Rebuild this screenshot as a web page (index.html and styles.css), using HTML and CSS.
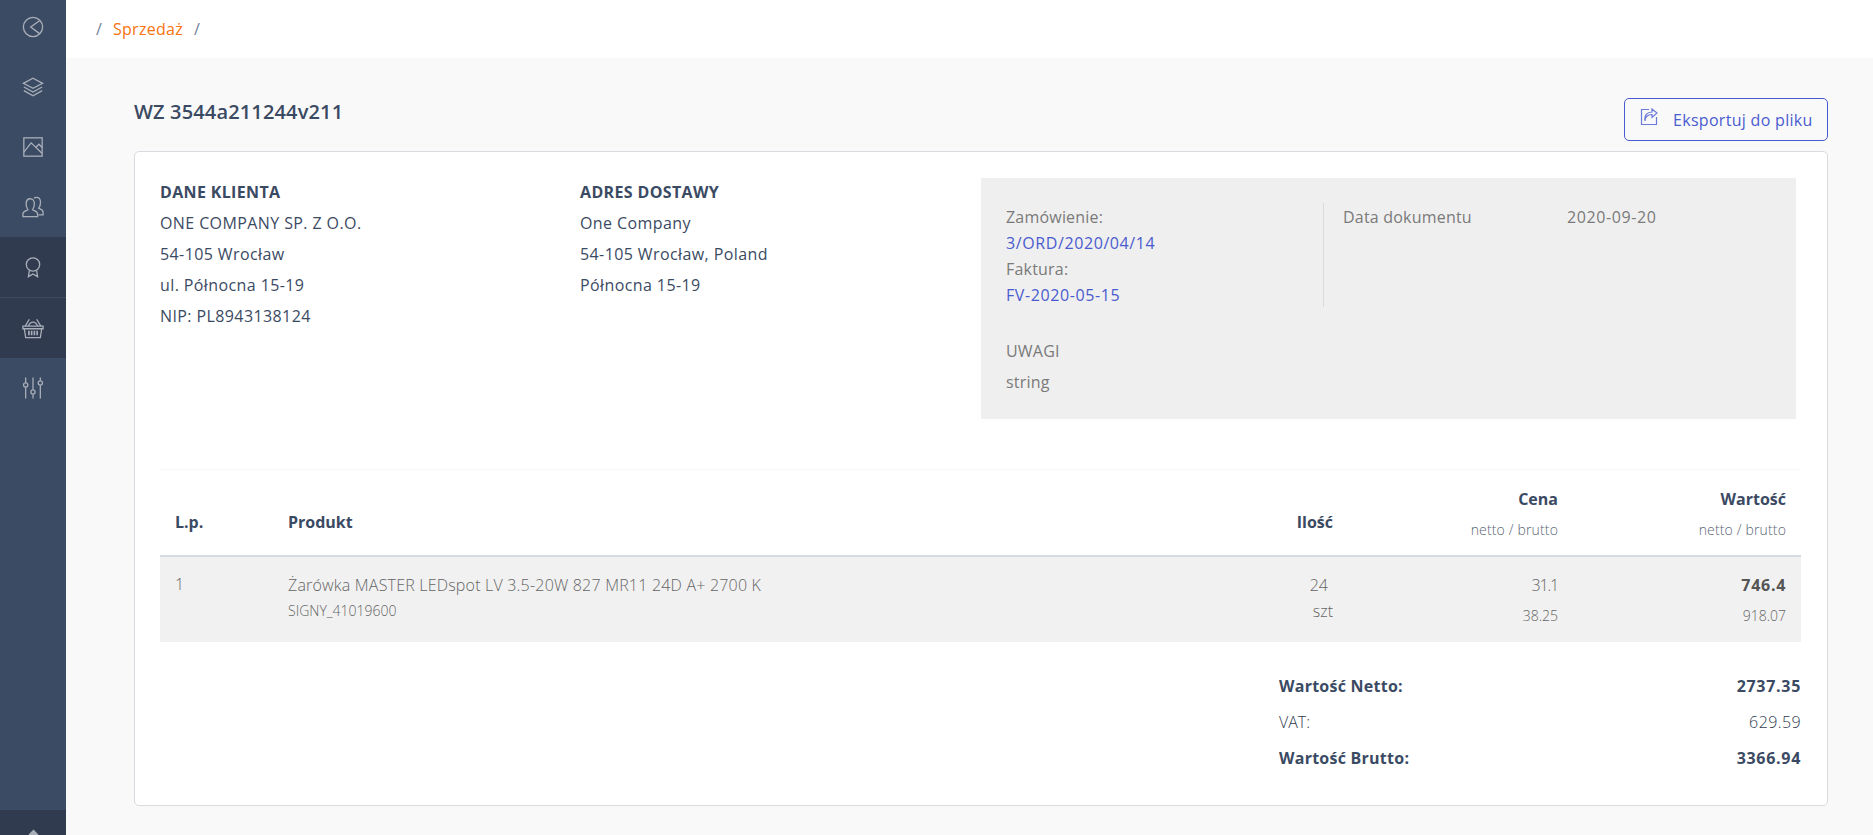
FILE: index.html
```html
<!DOCTYPE html>
<html lang="pl">
<head>
<meta charset="utf-8">
<title>WZ 3544a211244v211</title>
<link rel="stylesheet" href="styles.css">
</head>
<body>
<div class="app">
  <aside class="sidebar">
    <nav class="side-nav">
      <a class="side-item"><svg viewBox="0 0 24 24" class="ico"><circle cx="12" cy="12" r="10.500"/><path d="M19.500 4.800 9.500 12l10 7.500"/></svg></a>
      <a class="side-item"><svg viewBox="0 0 24 24" class="ico"><path d="M12 2.500 22.500 8 12 13.500 1.500 8z"/><path d="M2 12l10 5.500L22 12"/><path d="M2 16l10 5.500L22 16"/></svg></a>
      <a class="side-item"><svg viewBox="0 0 24 24" class="ico"><rect x="2" y="2" width="20" height="20"/><path d="M2 17.500 10 7.500 22 19"/><path d="M15 12.500l3.500-3.500 3.500 3.500"/></svg></a>
      <a class="side-item"><svg viewBox="0 0 24 24" class="ico"><path d="M1 22.500v-3c0-2.500 3-3 5.500-4.500-1.300-2-2-4-2-6.500C4.500 5 6.500 3 9 3s4.500 2 4.500 5.500c0 2.500-.7 4.500-2 6.500 2.500 1.500 5.500 2 5.500 4.500v3z"/><path d="M13 2.500c.8-.6 1.700-1 2.800-1 2.600 0 4.400 2 4.400 5.500 0 2.500-.6 4.500-2 6.300 2.300 1.200 4.800 1.700 4.800 4.200v3h-5"/></svg></a>
      <a class="side-item is-active"><svg viewBox="0 0 24 24" class="ico"><circle cx="12" cy="9.300" r="7.300"/><path d="M8 16l-1 6.500 5-3 5 3-1-6.500"/></svg></a>
      <a class="side-item is-active has-top"><svg viewBox="0 0 24 24" class="ico"><path d="M1 10h22v2.800H1z"/><path d="M2.500 12.800 4 22.500h16l1.500-9.700"/><path d="M3.500 10 8 2.500M20.500 10 16 2.500"/><path d="M7 10c1-3 3-4.500 5-4.500s4 1.500 5 4.500"/><path class="ico-bars" d="M7.500 15v5M10.500 15v5M13.500 15v5M16.500 15v5"/></svg></a>
      <a class="side-item"><svg viewBox="0 0 24 24" class="ico"><path d="M4 .5v6M4 11v12.500M12 .5V14M12 19v4.500M20 .5v3.500M20 9v14.500"/><circle cx="4" cy="8.700" r="2.300"/><circle cx="12" cy="16.400" r="2.300"/><circle cx="20" cy="6.500" r="2.300"/></svg></a>
    </nav>
    <div class="side-foot"><span class="side-foot-mark"></span></div>
  </aside>
  <div class="main">
    <header class="topbar">
      <span class="crumb-sep">/</span>
      <a class="crumb">Sprzedaż</a>
      <span class="crumb-sep">/</span>
    </header>
    <main class="content">
      <div class="page-head">
        <h1 class="page-title">WZ 3544a211244v211</h1>
        <button class="btn-export" type="button">
          <svg viewBox="0 0 18 18" class="btn-ico"><path d="M9 1.500H1.500v15h15V9"/><path d="M5 13c0-4 2.500-6.500 7-6.500v3L17 5l-5-4v3c-5 0-8 3.500-7 9z"/></svg>
          <span>Eksportuj do pliku</span>
        </button>
      </div>
      <section class="card">
        <div class="info-row">
          <div class="address">
            <h3 class="addr-title">DANE KLIENTA</h3>
            <p>ONE COMPANY SP. Z O.O.</p>
            <p>54-105 Wrocław</p>
            <p>ul. Północna 15-19</p>
            <p>NIP: PL8943138124</p>
          </div>
          <div class="address">
            <h3 class="addr-title">ADRES DOSTAWY</h3>
            <p>One Company</p>
            <p>54-105 Wrocław, Poland</p>
            <p>Północna 15-19</p>
          </div>
          <div class="doc-panel">
            <div class="doc-top">
              <div class="doc-links">
                <div>Zamówienie:</div>
                <a class="link">3/ORD/2020/04/14</a>
                <div>Faktura:</div>
                <a class="link">FV-2020-05-15</a>
              </div>
              <div class="doc-date">
                <span class="doc-date-label">Data dokumentu</span>
                <span class="doc-date-value">2020-09-20</span>
              </div>
            </div>
            <div class="notes">
              <p>UWAGI</p>
              <p>string</p>
            </div>
          </div>
        </div>
        <table class="items">
          <thead>
            <tr>
              <th class="col-lp th-single">L.p.</th>
              <th class="col-prod th-single">Produkt</th>
              <th class="col-qty th-single">Ilość</th>
              <th class="col-price"><div class="th-main">Cena</div><div class="th-sub">netto / brutto</div></th>
              <th class="col-value"><div class="th-main">Wartość</div><div class="th-sub">netto / brutto</div></th>
            </tr>
          </thead>
          <tbody>
            <tr>
              <td class="col-lp">1</td>
              <td class="col-prod"><div class="prod-name">Żarówka MASTER LEDspot LV 3.5-20W 827 MR11 24D A+ 2700 K</div><div class="prod-sku">SIGNY_41019600</div></td>
              <td class="col-qty"><div class="qty-num">24</div><div class="qty-unit">szt</div></td>
              <td class="col-price"><div class="val-main val-narrow">31.1</div><div class="val-sub">38.25</div></td>
              <td class="col-value"><div class="val-main val-strong">746.4</div><div class="val-sub">918.07</div></td>
            </tr>
          </tbody>
        </table>
        <div class="totals">
          <div class="total-row total-strong"><span>Wartość Netto:</span><span class="total-num">2737.35</span></div>
          <div class="total-row"><span>VAT:</span><span class="total-num-light">629.59</span></div>
          <div class="total-row total-strong"><span>Wartość Brutto:</span><span class="total-num">3366.94</span></div>
        </div>
      </section>
    </main>
  </div>
</div>
</body>
</html>
```
FILE: styles.css
```css
* { box-sizing: border-box; }
html, body { margin: 0; height: 100%; overflow: hidden; }
body { font-family: "Open Sans", sans-serif; font-size: 16px; color: #3b4a63; background: #f9f9f9; }
.app { display: flex; height: 835px; }

.sidebar { width: 66px; flex: none; background: #3c4b64; display: flex; flex-direction: column; justify-content: space-between; }
.side-nav { display: flex; flex-direction: column; }
.side-item { height: 60px; display: flex; align-items: center; justify-content: center; }
.side-item:first-child { height: 57px; padding-bottom: 3px; }
.side-item.is-active { background: #303b50; }
.side-item.has-top { border-top: 1px solid #3f4b61; height: 61px; }
.ico { width: 22px; height: 22px; fill: none; stroke: #a9afb9; stroke-width: 1.400; }
.ico-bars { stroke-width: 1.800; }
.side-foot { height: 25px; background: #303b50; display: flex; justify-content: center; }
.side-foot-mark { width: 7px; height: 7px; margin-top: 21px; background: #a9afb9; transform: rotate(45deg); }

.main { flex: 1; min-width: 0; display: flex; flex-direction: column; }
.topbar { height: 58px; background: #fff; display: flex; align-items: center; gap: 11px; padding: 0 0 0 30px; }
.crumb-sep { color: #6f8299; }
.crumb { color: #f9730f; letter-spacing: .3px; }

.content { padding: 0 45px 0 68px; }
.page-head { display: flex; justify-content: space-between; height: 93px; }
.page-title { margin: 40px 0 0; font-size: 20px; line-height: 28px; font-weight: 600; letter-spacing: .15px; color: #3b4a63; }
.btn-export { width: 204px; height: 43px; margin-top: 40px; border: 1px solid #4a5bd0; border-radius: 5px; background: transparent; color: #4a5bd0; font: 16px "Open Sans", sans-serif; letter-spacing: .3px; display: flex; align-items: center; gap: 15px; padding: 0 0 0 15px; }
.btn-ico { width: 18px; height: 18px; margin-top: -5px; flex: none; fill: none; stroke: #6b79d8; stroke-width: 1.200; }

.card { height: 655px; background: #fff; border: 1px solid #d8dbe0; border-radius: 5px; padding: 26px 0 0 25px; }
.info-row { display: flex; height: 243px; }
.address { width: 420px; line-height: 31px; margin-top: -1px; letter-spacing: .4px; }
.address p { margin: 0; }
.addr-title { margin: 0; font-size: 16px; font-weight: 700; line-height: 31px; letter-spacing: .35px; }
.doc-panel { width: 815px; height: 241px; margin-left: -19px; background: #efefef; padding: 25px 25px 0; color: #7a7a7a; letter-spacing: .2px; }
.doc-top { display: flex; height: 104px; line-height: 26px; }
.doc-links { width: 318px; border-right: 1px solid #d8dbe0; padding-top: 1px; }
.link { display: block; color: #4a5bd0; letter-spacing: .6px; }
.doc-date { padding: 1px 0 0 19px; display: flex; align-items: flex-start; }
.doc-date-label { width: 224px; }
.doc-date-value { letter-spacing: .6px; }
.notes { margin-top: 29px; line-height: 31px; }
.notes p { margin: 0; }

.items { width: 1641px; margin-top: 48px; border-collapse: collapse; border-top: 1px solid #f8f8f8; table-layout: fixed; }
.items th { height: 86px; padding: 14px 0 0; vertical-align: top; font-weight: 700; border-bottom: 2px solid #d8dbe0; }
.items th.th-single { padding-top: 37px; line-height: 30px; }
.th-main { line-height: 30px; }
.th-sub { font-size: 14px; font-weight: 300; line-height: 31px; color: #5a6575; letter-spacing: .15px; }
.col-lp { width: 128px; padding-left: 15px !important; text-align: left; }
.col-prod { text-align: left; }
.col-qty { width: 140px; text-align: right; }
.col-price { width: 225px; text-align: right; }
.col-value { width: 243px; text-align: right; padding-right: 15px !important; }
.items td { height: 86px; padding: 16px 0 0; background: #f1f1f1; color: #656565; font-weight: 300; vertical-align: top; }
.prod-name { line-height: 24px; letter-spacing: .2px; }
.prod-sku { font-size: 14px; line-height: 28px; }
.qty-num { padding-right: 5px; line-height: 24px; }
.qty-unit { line-height: 28px; }
.val-main { line-height: 24px; }
.val-narrow { letter-spacing: -1.200px; }
.val-strong { font-weight: 700; color: #555; letter-spacing: .7px; }
.val-sub { font-size: 14px; line-height: 38px; }

.totals { width: 522px; margin-left: 1119px; padding-top: 26px; }
.total-row { display: flex; justify-content: space-between; height: 36px; line-height: 36px; font-weight: 300; color: #2f3a4e; }
.total-strong { font-weight: 700; color: #3b4a63; letter-spacing: .25px; }
.total-num { letter-spacing: .7px; }
.total-num-light { letter-spacing: .4px; }
```
